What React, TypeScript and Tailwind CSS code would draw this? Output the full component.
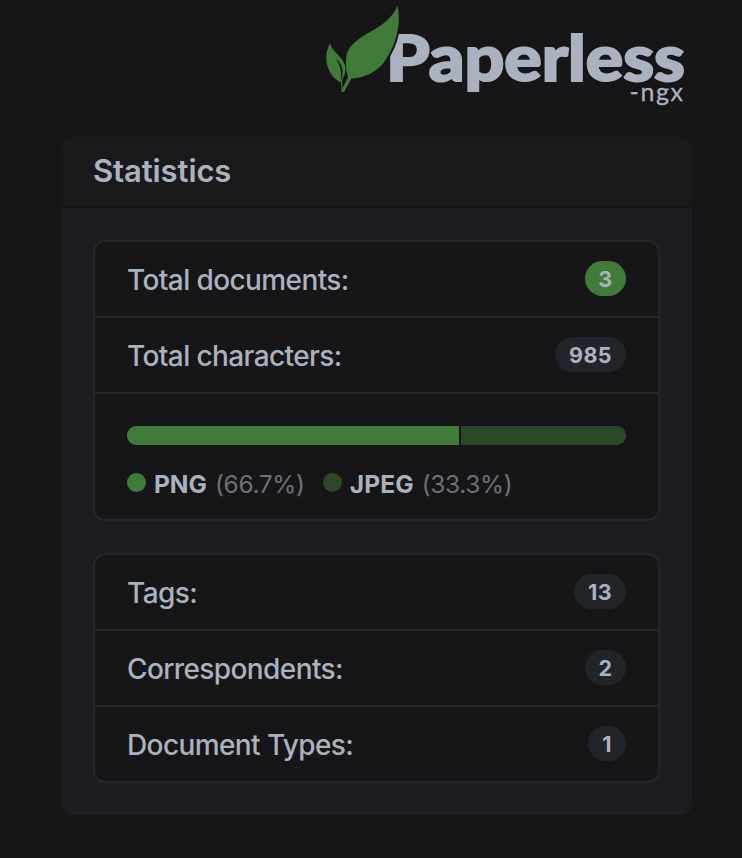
import React from 'react';
import clsx from 'clsx';

interface StatRow {
  label: string;
  value: number;
  primary?: boolean;
  badgeClass: string;
}

const totals: StatRow[] = [
  { label: 'Total documents:', value: 3, primary: true, badgeClass: 'w-[41px]' },
  { label: 'Total characters:', value: 985, badgeClass: 'w-[71px]' },
];

const counts: StatRow[] = [
  { label: 'Tags:', value: 13, badgeClass: 'w-[52px]' },
  { label: 'Correspondents:', value: 2, badgeClass: 'w-[41px]' },
  { label: 'Document Types:', value: 1, badgeClass: 'w-[38px]' },
];

const fileTypes = [
  { name: 'PNG', percent: 66.7, color: 'bg-[#407b39]', nameClass: 'w-[53px]' },
  { name: 'JPEG', percent: 33.3, color: 'bg-[#2c4829]', nameClass: 'w-[64px] tracking-[0.2px]' },
];

const Logo: React.FC = () => (
  <svg width="372" height="112" viewBox="320 0 372 112" className="block" aria-label="Paperless-ngx">
    <text
      x="386" y="81.3" textLength="299" lengthAdjust="spacingAndGlyphs"
      className="fill-[#abb2bf] stroke-[#abb2bf] stroke-[2px] font-['Lato',sans-serif] text-[62.5px] font-black"
    >
      Paperless
    </text>
    <text
      x="629.5" y="100.5" textLength="53.5"
      className="fill-[#abb2bf] stroke-[#abb2bf] stroke-[0.3px] font-['Lato',sans-serif] text-[25px]"
    >
      -ngx
    </text>
    {/* large leaf, outlined so it cuts into the P */}
    <path
      d="M397.500 5.300C399.500 15 399 26 397 33.500C395 43 390 54 383.300 63.300C375 73 365 77.500 351.300 78.800L344 91.700L340.700 91.700L348 77.500C346 70 345.300 63 346.500 55.500C348 48 354 42 363.300 36C376 28.500 392 21 397.500 5.300Z"
      className="fill-[#407b39] stroke-[#161618] stroke-[4px] [paint-order:stroke]"
    />
    {/* small leaf */}
    <path
      d="M330 43.300C331.500 49 335.500 52 339.500 56.500C345 62.500 346.500 67.500 345 73.300C344.300 76.500 342.700 78.500 341.800 82L342.800 89L341.700 90L340.800 82.200C334 79.500 329.500 73 327.500 66C325 58 326.500 50 330 43.300Z"
      className="fill-[#407b39]"
    />
    <path
      d="M336.500 59C341 63 344.500 71 341.300 80.500C341.800 72 340.500 65.500 336.500 59Z"
      className="fill-[#161618] stroke-[#161618] stroke-[0.3px]"
    />
  </svg>
);

const StatItem: React.FC<{ row: StatRow }> = ({ row }) => (
  <li className="box-content flex h-[73px] items-center justify-between pb-px">
    <span className="ml-8 pt-0.5 text-[28px] leading-9 font-[450] tracking-[-0.6px]">{row.label}</span>
    <span
      className={clsx(
        'mr-8 flex h-[35px] items-center justify-center rounded-full pt-0.5 text-[21.5px] leading-none font-bold tracking-[0.4px]',
        row.primary ? 'bg-[#407b39]' : 'bg-[#212529]',
        row.badgeClass,
      )}
    >
      {row.value}
    </span>
  </li>
);

const listClass =
  'divide-y-2 divide-[#242629] overflow-hidden rounded-xl border-2 border-[#242629] bg-[#161618]';

const App: React.FC = () => (
  <div className="h-[858px] w-[742px] overflow-hidden bg-[#161618] pr-[50px] pl-[61px] font-['Inter',sans-serif] text-[#abb2bf]">
    <header className="flex h-[137px] justify-end">
      <Logo />
    </header>

    <section className="overflow-hidden rounded-xl bg-[#1d1c21]">
      <div className="h-[71px] border-b-2 border-[#151517] bg-[#1a1a1c] px-8 pt-4">
        <h4 className="text-[31px] leading-9 font-semibold tracking-[-0.1px]">Statistics</h4>
      </div>

      <div className="flex flex-col gap-8 px-8 py-8">
        <ul className={listClass}>
          {totals.map((row) => <StatItem key={row.label} row={row} />)}
          <li className="h-[125px] px-8 pt-8">
            <div className="flex h-[19px] gap-0.5 overflow-hidden rounded-[9px]">
              {fileTypes.map((t) => (
                <div key={t.name} className={t.color} style={{ width: `${t.percent}%` }} />
              ))}
            </div>
            <div className="mt-[21px] flex gap-[18px] text-[24.5px] leading-9">
              {fileTypes.map((t) => (
                <div key={t.name} className="flex items-center">
                  <span className={clsx('mr-2 mb-1 size-[19px] rounded-full', t.color)} />
                  <span className={clsx('font-bold', t.nameClass)}>{t.name}</span>
                  <span className="ml-2 tracking-[-0.35px] text-[#6d7078]">({t.percent}%)</span>
                </div>
              ))}
            </div>
          </li>
        </ul>

        <ul className={listClass}>
          {counts.map((row) => <StatItem key={row.label} row={row} />)}
        </ul>
      </div>
    </section>
  </div>
);

export default App;
